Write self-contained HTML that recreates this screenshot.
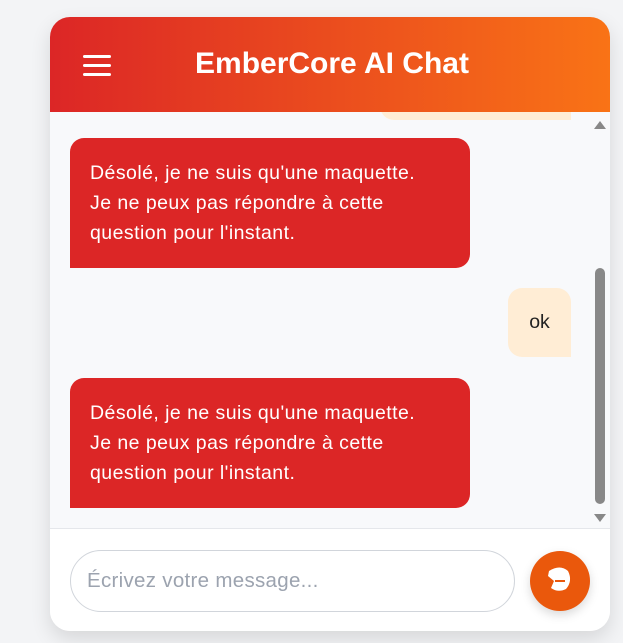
<!DOCTYPE html><html><head><style>
body{margin:0;width:623px;height:643px;background:#f3f4f6;font-family:"Liberation Sans",sans-serif;position:relative;overflow:hidden}
.card{position:absolute;left:50px;top:17px;width:560px;height:614px;background:#fff;border-radius:20px;overflow:hidden;box-shadow:0 8px 20px rgba(0,0,0,.12)}
.hdr{height:95px;background:linear-gradient(90deg,#dc2626,#f97316);position:relative}
.hdr h1{margin:0;position:absolute;left:0;right:0;top:30px;text-align:center;color:#fff;font-size:30px;font-weight:bold;padding-left:4px}
.ham{position:absolute;left:33px;top:38px;width:28px}
.ham i{display:block;height:3px;background:#fff;border-radius:2px;margin-bottom:6px}
.msgs{position:absolute;top:95px;left:0;width:560px;height:416px;background:#f8f9fb;overflow:hidden}
.bot{position:absolute;left:20px;width:360px;padding:20px;background:#dc2626;color:#fff;font-size:19.5px;letter-spacing:.45px;line-height:30px;border-radius:14px 14px 14px 0;white-space:nowrap}
.user{position:absolute;background:#ffedd5;color:#222;font-size:19.5px;border-radius:14px 14px 0 14px}
.sb{position:absolute;right:3px;top:0;width:14px;height:416px}
.thumb{position:absolute;left:2px;top:156px;width:10px;height:236px;background:#888;border-radius:5px}
.inp{position:absolute;top:511px;left:0;right:0;height:103px;border-top:1px solid #e5e7eb;background:#fff}
.field{position:absolute;left:20px;top:21px;border:1px solid #d1d5db;border-radius:31px;font-size:20.5px;letter-spacing:.3px;color:#9ca3af;line-height:60px;padding-left:16px;box-sizing:border-box;width:445px;height:62px}
.send{position:absolute;left:480px;top:22px;width:60px;height:60px;border-radius:50%;background:#ea580c;box-shadow:0 4px 10px rgba(0,0,0,.15)}
</style></head><body>
<div class="card">
<div class="hdr"><div class="ham"><i></i><i></i><i></i></div><h1>EmberCore AI Chat</h1></div>
<div class="msgs">
<div class="user" style="left:330px;top:-20px;width:191px;height:28px"></div>
<div class="bot" style="top:26px">Désolé, je ne suis qu'une maquette.<br>Je ne peux pas répondre à cette<br>question pour l'instant.</div>
<div class="user" style="left:458px;top:176px;width:63px;height:69px;line-height:69px;text-align:center">ok</div>
<div class="bot" style="top:266px">Désolé, je ne suis qu'une maquette.<br>Je ne peux pas répondre à cette<br>question pour l'instant.</div>
<div class="sb"><svg width="14" height="416" style="position:absolute;left:0;top:0"><path d="M1 17 L7 9 L13 17Z" fill="#888"/><path d="M1 402 L7 410 L13 402Z" fill="#888"/></svg><div class="thumb"></div></div>
</div>
<div class="inp"><div class="field">Écrivez votre message...</div>
<div class="send"><svg width="60" height="60"><path d="M19 20 Q30 13 38 20 Q43 30 36 38 Q28 42 21 37 L24 30 L18 25 Z" fill="#fff"/><path d="M25 30 L35 30" stroke="#ea580c" stroke-width="2"/></svg></div></div>
</div>
</body></html>
